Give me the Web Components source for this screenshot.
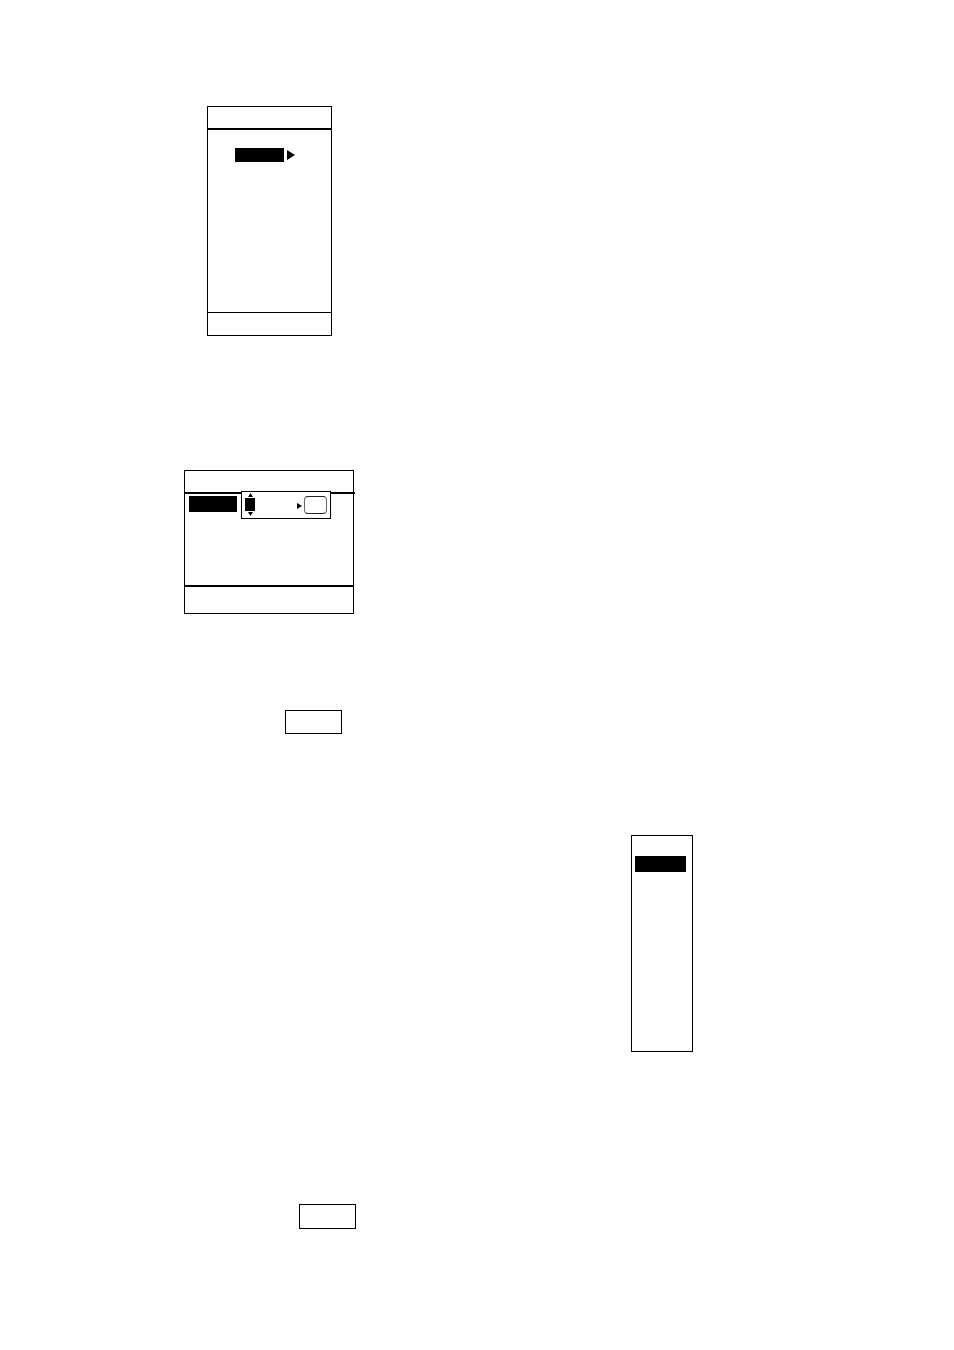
<!DOCTYPE html>
<html lang="en">
<head>
<meta charset="utf-8">
<meta name="viewport" content="width=device-width">
<title>Display diagrams</title>
<style>
  body { margin: 0; background: #fff; color: #000; font-family: "Liberation Sans", sans-serif; }
</style>
</head>
<body>
<manual-page>
  <screen-panel slot="left" style="--w:125px; --h:230px; --head:21px; --foot:22px; --rule:1px; margin:106px 0 0 207px">
    <menu-bar style="--w:49px; --h:14px; margin:18px 0 0 27px"></menu-bar>
    <arrow-mark dir="right" style="--w:8px; --h:10px; margin:20px 0 0 3px"></arrow-mark>
  </screen-panel>
  <screen-panel slot="left" wide style="--w:170px; --h:144px; --head:21px; --foot:26px; --rule:2px; margin:134px 0 0 184px">
    <menu-bar style="--w:48px; --h:16px; margin:2px 0 0 4px"></menu-bar>
    <value-popup></value-popup>
  </screen-panel>
  <key-box slot="left" style="--w:57px; --h:24px; margin:96px 0 0 285px"></key-box>
  <key-box slot="left" style="--w:57px; --h:25px; margin:470px 0 121px 299px"></key-box>
  <menu-list slot="right"></menu-list>
</manual-page>
<script>
const define = (name, html) => {
  const template = document.createElement('template');
  template.innerHTML = html;
  customElements.define(name, class extends HTMLElement {
    constructor() {
      super();
      this.attachShadow({ mode: 'open' }).append(template.content.cloneNode(true));
    }
  });
};

define('manual-page', `
  <style>
    :host { display: block; }
    main { display: grid; grid-template-columns: 1fr 1fr; }
    .column { display: flex; flex-direction: column; align-items: flex-start; min-width: 0; }
  </style>
  <main>
    <div class="column"><slot name="left"></slot></div>
    <div class="column"><slot name="right"></slot></div>
  </main>`);

define('screen-panel', `
  <style>
    :host { display: flex; flex-direction: column; box-sizing: border-box; width: var(--w); min-height: var(--h); border: 1px solid #000; }
    header { height: var(--head); border-bottom: 2px solid #000; }
    :host([wide]) header { margin-right: -2px; }
    .body { flex: 1; display: flex; align-items: flex-start; position: relative; }
    footer { height: var(--foot); border-top: var(--rule) solid #000; }
  </style>
  <header></header>
  <div class="body"><slot></slot></div>
  <footer></footer>`);

define('menu-bar', `
  <style>:host { display: block; width: var(--w); height: var(--h); background: #000; }</style>`);

define('arrow-mark', `
  <style>
    :host { display: block; width: var(--w); height: var(--h); }
    svg { display: none; width: 100%; height: 100%; }
    :host([dir="right"]) .right, :host([dir="up"]) .up, :host([dir="down"]) .down { display: block; }
  </style>
  <svg class="right" viewBox="0 0 8 10" preserveAspectRatio="none" aria-hidden="true"><path d="M0 0L8 5L0 10Z"/></svg>
  <svg class="up" viewBox="0 0 6 4" preserveAspectRatio="none" aria-hidden="true"><path d="M3 0L6 4H0Z"/></svg>
  <svg class="down" viewBox="0 0 6 4" preserveAspectRatio="none" aria-hidden="true"><path d="M0 0H6L3 4Z"/></svg>`);

define('value-popup', `
  <style>
    :host { position: absolute; top: -3px; left: 56px; box-sizing: border-box; width: 90px; height: 28px;
            display: flex; justify-content: space-between; padding: 1px 3px; border: 1px solid #000; background: #fff; }
    .spinner { display: flex; flex-direction: column; align-items: flex-end; gap: 1px; }
    .spinner arrow-mark { --w: 5px; --h: 4px; margin-right: 2px; }
    .spinner menu-bar { --w: 10px; --h: 13px; }
    .confirm { display: flex; align-items: center; gap: 2px; }
    .confirm arrow-mark { --w: 5px; --h: 6px; margin-top: 2px; }
    key-box { --w: 23px; --h: 18px; --radius: 4px; --edge: #222 #666; }
  </style>
  <div class="spinner">
    <arrow-mark dir="up"></arrow-mark>
    <menu-bar></menu-bar>
    <arrow-mark dir="down"></arrow-mark>
  </div>
  <div class="confirm">
    <arrow-mark dir="right"></arrow-mark>
    <key-box></key-box>
  </div>`);

define('key-box', `
  <style>
    :host { display: block; width: var(--w); height: var(--h); }
    button { display: block; box-sizing: border-box; width: 100%; height: 100%; margin: 0; padding: 0;
             border: 1px solid; border-color: var(--edge, #000); border-radius: var(--radius, 0); background: #fff; }
  </style>
  <button type="button" aria-label="Key"></button>`);

define('menu-list', `
  <style>
    :host { display: block; box-sizing: border-box; width: 62px; min-height: 217px; margin: 835px 0 0 154px; padding: 20px 3px; border: 1px solid #000; }
    menu-bar { --w: 51px; --h: 16px; }
  </style>
  <menu-bar></menu-bar>`);
</script>
</body>
</html>
